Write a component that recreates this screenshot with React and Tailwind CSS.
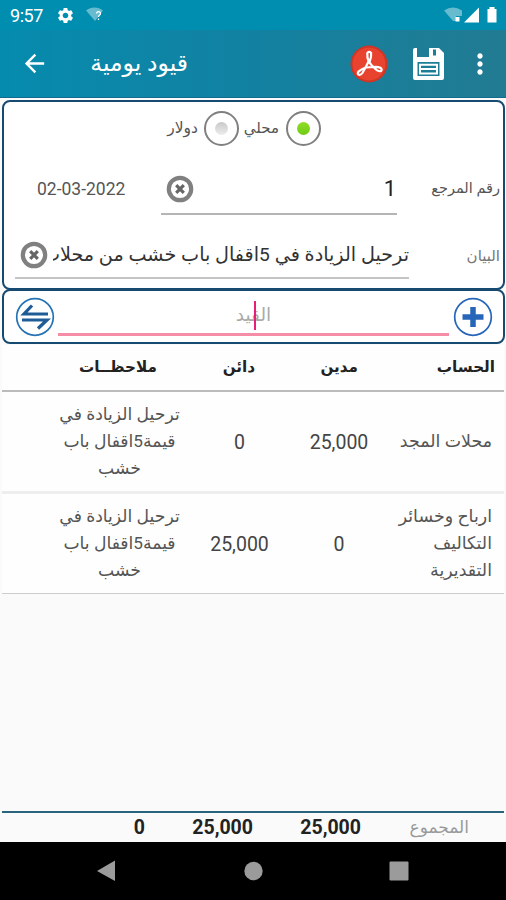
import clsx from "clsx";
import { MdArrowBack, MdSettings, MdMoreVert } from "react-icons/md";

const entries = [
  {
    id: 1,
    account: ["محلات المجد"],
    debit: "25,000",
    credit: "0",
    notes: ["ترحيل الزيادة في", "قيمة5اقفال باب", "خشب"],
  },
  {
    id: 2,
    account: ["ارباح وخسائر", "التكاليف", "التقديرية"],
    debit: "0",
    credit: "25,000",
    notes: ["ترحيل الزيادة في", "قيمة5اقفال باب", "خشب"],
  },
];

const Ar = ({ children, className }) => (
  <span
    dir="rtl"
    className={clsx("block whitespace-nowrap font-['Roboto','DejaVu_Sans',sans-serif]", className)}
  >
    {children}
  </span>
);

const StatusBar = () => (
  <div className="h-[30px] bg-[#008eb0] flex items-center pl-2.5 pr-2 text-white">
    <span className="text-[18px] w-[46px] tracking-tight">9:57</span>
    <MdSettings className="w-[19px] h-[19px]" />
    <svg viewBox="0 0 20 18" className="w-5 h-[18px] ml-2.5">
      <path d="M1 4.5C6 .5 13 .5 18 4.5L10 15Z" fill="#fff" opacity=".4" />
      <path
        d="M11.500 7.500a2 2 0 1 1 3 1.800q-1 .7-1 1.700M13.500 12.500v1.500"
        fill="none"
        stroke="#fff"
        strokeWidth="1.300"
      />
    </svg>
    <div className="flex-1" />
    <svg viewBox="0 0 54 18" className="w-[54px] h-[18px]">
      <path d="M0 4.5Q9-1.5 18 4.500V10H12v5H9Z" fill="#fff" opacity=".4" />
      <path d="M11.500 11h4v4.500h-4Z" fill="#fff" />
      <path d="M20 16.500 35 1.500v15Z" fill="#fff" />
      <path d="M43.500 3h2V1h5v2h2v13.500h-9Z" fill="#fff" />
    </svg>
  </div>
);

const AppBar = () => (
  <div className="h-[68px] bg-linear-to-r from-[#058bae] via-[#1281a1] to-[#217b92] border-b border-[#126c90] flex items-center text-white">
    <MdArrowBack className="w-[29px] h-[29px] ml-5" />
    <Ar className="ml-[41px] w-[98px] text-[23.5px]">قيود يومية</Ar>
    <div className="flex-1" />
    <svg viewBox="0 0 38 38" className="w-[38px] h-[38px]">
      <circle cx="19" cy="19" r="18.500" fill="#cf3524" />
      <circle cx="19" cy="19" r="16.500" fill="#e7432e" />
      <g fill="none" stroke="#fff" strokeWidth="2.200" strokeLinejoin="round">
        <path d="M17.300 8q2.200-2.200 3.800 0 .3 4-1.100 7.500l-1 2q-2.200-5-1.700-9.500Z" />
        <path d="M18.800 16 15.500 22.500q-3.500 1.200-6.700 3.800-1.800 2.200-.3 3.300 2 .8 4-1.800l3-5.300" />
        <path d="M19 16.500q1.500 3 4.500 5.500 3.500-.6 7 .8 2 1.500.5 3.200-2.800 1.200-7.500-4l-8 .5" />
      </g>
    </svg>
    <svg viewBox="0 0 31 32" className="w-[31px] h-8 ml-[25px]">
      <path
        fill="#fff"
        fillRule="evenodd"
        d="M0 2Q0 0 2 0h2v9h12V0h10l5 5v25q0 2-2 2H2q-2 0-2-2ZM20 1.500v6h3v-6ZM4.500 14V28h22V14Z"
      />
      <path
        d="M7 16.700h17v8.800H7ZM7 21.100h17"
        fill="none"
        stroke="#fff"
        strokeWidth="2"
      />
    </svg>
    <MdMoreVert className="w-8 h-8 ml-5 mr-2.5" />
  </div>
);

const Radio = ({ checked }) => (
  <span className="w-[35px] h-[35px] rounded-full border-2 border-[#808080] flex items-center justify-center">
    <span
      className={clsx(
        "w-[13px] h-[13px] rounded-full bg-linear-to-b",
        checked ? "from-[#91dd25] to-[#6ecb13]" : "from-[#c9c9c9] to-[#ededed]"
      )}
    />
  </span>
);

const ClearIcon = () => (
  <svg viewBox="0 0 28 28" className="w-7 h-7 shrink-0">
    <circle cx="14" cy="14" r="11.200" fill="#fff" stroke="#808080" strokeWidth="4.200" />
    <path d="m10.200 10.200 7.600 7.600m0-7.600-7.600 7.600" stroke="#666" strokeWidth="3.200" />
  </svg>
);

const VoucherForm = () => (
  <div className="mx-0.5 mt-0.5 h-[190px] w-[503px] border-2 border-[#174a70] rounded-lg bg-white">
    <div className="h-[53px] flex items-center pl-[163px]">
      <Ar className="w-[31px] text-[15.5px] text-[#555]">دولار</Ar>
      <span className="ml-1.5"><Radio /></span>
      <Ar className="ml-1 w-[36px] text-[15px] text-[#555]">محلي</Ar>
      <span className="ml-[7px]"><Radio checked /></span>
    </div>
    <div className="h-[60px] flex">
      <span className="w-[157px] pl-[33px] pt-[23px] text-[17.5px] leading-[22px] text-[#555]">02-03-2022</span>
      <div className="w-[236px] border-b-2 border-[#b5b5b5] flex items-center pl-[5px] pt-2.5">
        <ClearIcon />
        <span className="flex-1 text-right text-[22px] pr-px pb-0.5 text-[#222]">1</span>
      </div>
      <Ar className="w-[103px] pt-[22px] text-[14.5px] leading-[24px] text-[#555]">رقم المرجع</Ar>
    </div>
    <div className="h-[64px] flex">
      <div className="ml-[11px] w-[394px] border-b-2 border-[#c4c4c4] flex items-center pl-[5px] pt-[18px]">
        <ClearIcon />
        <div dir="rtl" className="ml-[5px] w-[356px] overflow-hidden">
          <Ar className="text-[19.2px] leading-[34px] text-[#333]">
            ترحيل الزيادة في 5اقفال باب خشب من محلات
          </Ar>
        </div>
      </div>
      <Ar className="w-[91px] pt-[29px] text-[15px] leading-[24px] text-[#777]">البيان</Ar>
    </div>
  </div>
);

const EntryInput = () => (
  <div className="mx-0.5 -mt-px h-[55px] w-[503px] border-2 border-[#174a70] rounded-lg bg-white flex items-center pl-[11px]">
    <svg viewBox="0 0 40 40" className="w-10 h-10">
      <circle cx="20" cy="20" r="18.300" fill="#fff" stroke="#2573b3" strokeWidth="1.700" />
      <path d="M33 17H9L17 8.500" fill="none" stroke="#1e5c98" strokeWidth="3.200" />
      <path d="M7 23h25L23 31.500" fill="none" stroke="#1e5c98" strokeWidth="3.200" />
    </svg>
    <div className="ml-[3px] -mt-[3px] w-[391px] h-[41px] border-b-[3px] border-[#f48da5] relative flex justify-center">
      <Ar className="text-[18.5px] leading-[40px] text-[#aaa]">القيد</Ar>
      <span className="absolute left-[196px] top-[6px] w-[2px] h-[29px] bg-[#e91e78]" />
    </div>
    <svg viewBox="0 0 40 40" className="w-10 h-10 ml-1">
      <circle cx="20" cy="20" r="18.300" fill="#fff" stroke="#2765b8" strokeWidth="1.700" />
      <path d="M20 10v20M9.500 20h21" stroke="#2765b8" strokeWidth="5.500" />
    </svg>
  </div>
);

const EntriesTable = () => (
  <div className="mx-0.5 mt-px bg-[#fefefe]">
    <div className="h-[47px] border-b-2 border-[#bbb] flex items-center text-[15.2px] font-bold text-[#222]">
      <Ar className="w-[155px]">ملاحظــات</Ar>
      <Ar className="w-[98px]">دائن</Ar>
      <Ar className="w-[103px]">مدين</Ar>
      <Ar className="w-[137px]">الحساب</Ar>
    </div>
    {entries.map((e) => (
      <div
        key={e.id}
        className={clsx(
          "flex items-center text-[#555]",
          e.id === 1 ? "h-[102px] border-b-[3px] border-[#eee]" : "h-[100px] pb-px border-b border-[#ccc]"
        )}
      >
        <div className="w-[117px] ml-[59px] flex flex-col items-center">
          {e.notes.map((line) => (
            <Ar key={line} className="text-[17.2px] leading-[27px]">{line}</Ar>
          ))}
        </div>
        <span className="w-[123px] text-center text-[19.5px] pt-[3px] text-[#444]">{e.credit}</span>
        <span className="w-[76px] text-center text-[19.5px] pt-[3px] text-[#444]">{e.debit}</span>
        <div className="w-[115px]">
          {e.account.map((line) => (
            <Ar key={line} className="text-[17.4px] leading-[27px]">{line}</Ar>
          ))}
        </div>
      </div>
    ))}
  </div>
);

const Totals = () => (
  <div className="mx-0.5 h-[31px] border-t-2 border-[#28647c] flex items-center pt-px text-[19.5px] font-bold text-[#222]">
    <span className="w-[143px] text-right">0</span>
    <span className="w-[108px] text-right">25,000</span>
    <span className="w-[108px] text-right">25,000</span>
    <Ar className="w-[108px] text-[17px] font-normal text-[#999]">المجموع</Ar>
  </div>
);

const NavBar = () => (
  <div className="h-[58px] bg-black flex">
    <svg viewBox="0 0 506 58" className="w-[506px] h-[58px]" fill="#9b9b9b">
      <path d="M97 29 115 18.500v20.500Z" />
      <circle cx="253.500" cy="29" r="9.200" />
      <rect x="389.500" y="19.500" width="19" height="19" rx="1" />
    </svg>
  </div>
);

const App = () => {
  return (
    <div className="w-[506px] h-[900px] overflow-hidden flex flex-col bg-[#fafafa] font-['Roboto',sans-serif]">
      <StatusBar />
      <AppBar />
      <VoucherForm />
      <EntryInput />
      <EntriesTable />
      <div className="flex-1" />
      <Totals />
      <NavBar />
    </div>
  );
};

export default App;
